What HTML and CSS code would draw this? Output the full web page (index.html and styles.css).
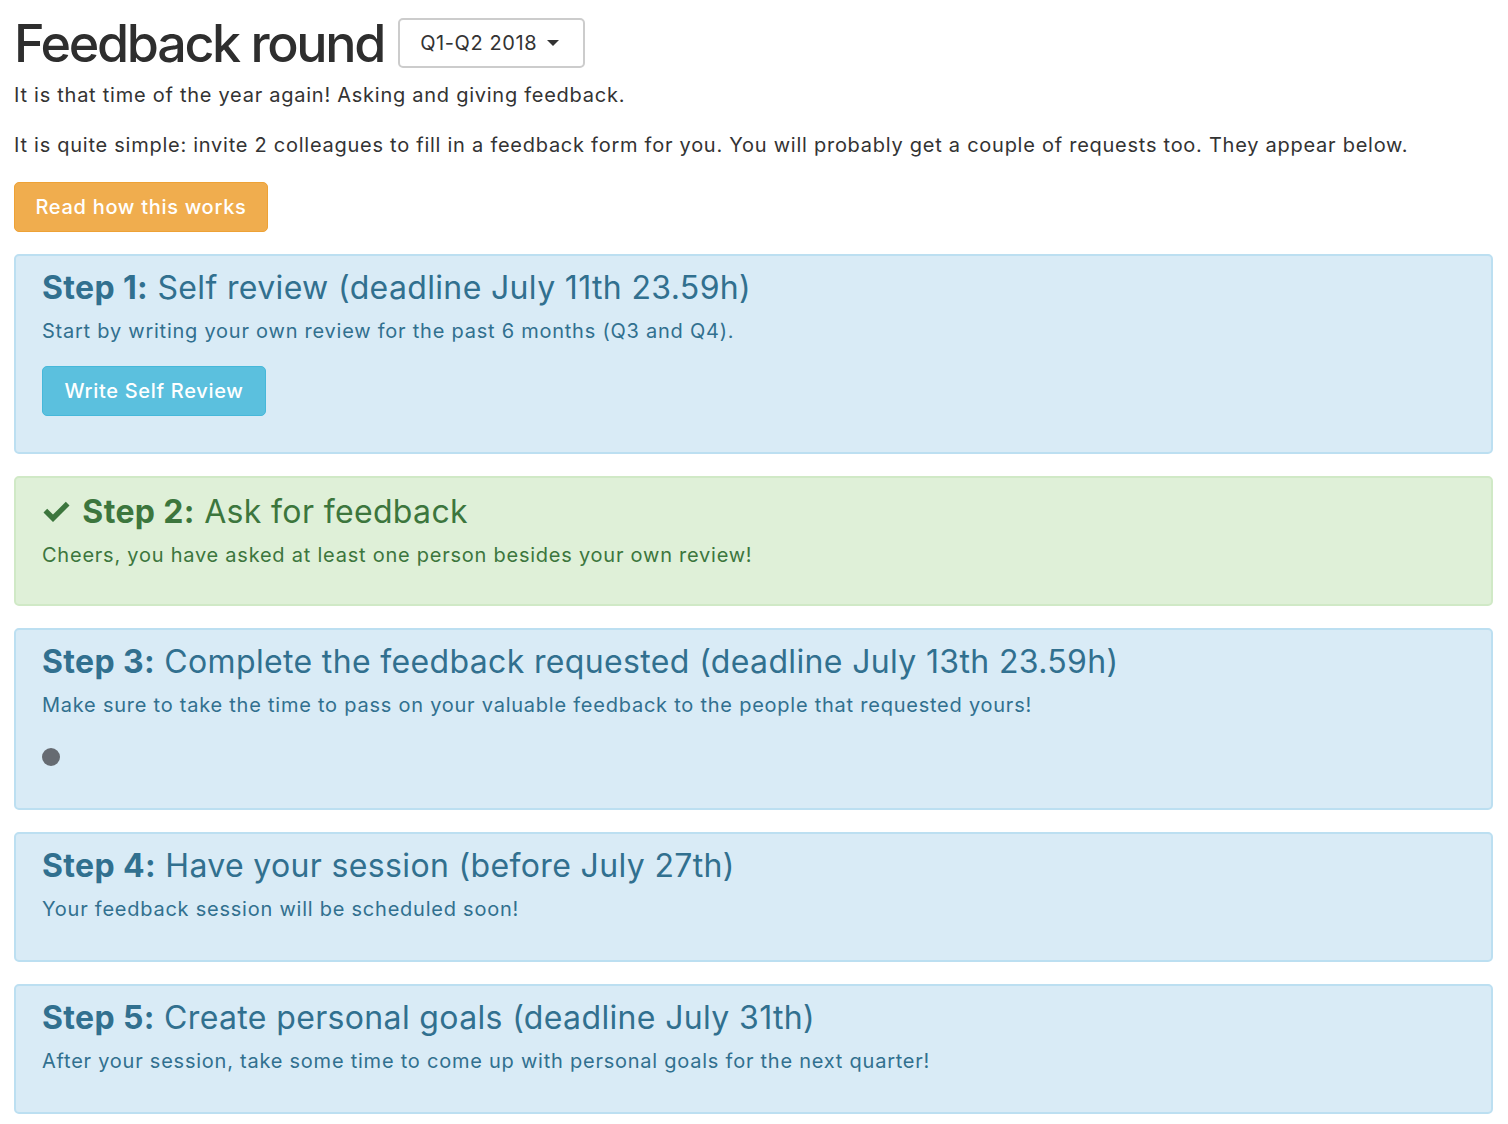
FILE: index.html
```html
<!DOCTYPE html>
<html>
<head>
<meta charset="utf-8">
<link rel="stylesheet" href="styles.css">
</head>
<body>
<div class="page">
  <div class="title-row">
    <h1 class="title">Feedback round</h1>
    <button class="dropdown">Q1-Q2 2018 <span class="caret"></span></button>
  </div>
  <p class="intro">It is that time of the year again! Asking and giving feedback.</p>
  <p class="intro">It is quite simple: invite 2 colleagues to fill in a feedback form for you. You will probably get a couple of requests too. They appear below.</p>
  <button class="btn btn-warning">Read how this works</button>

  <div class="alert alert-info">
    <h4 class="alert-heading"><strong>Step 1:</strong> Self review (deadline July 11th 23.59h)</h4>
    <p class="alert-text">Start by writing your own review for the past 6 months (Q3 and Q4).</p>
    <button class="btn btn-info">Write Self Review</button>
  </div>

  <div class="alert alert-success">
    <h4 class="alert-heading"><svg class="check" viewBox="0 0 29 22" width="29" height="22"><path d="M1.5 11.5 L5.2 7.8 L11 13.6 L23.8 0.8 L27.5 4.5 L11 21 Z" fill="#3c763d"/></svg> <strong>Step 2:</strong> Ask for feedback</h4>
    <p class="alert-text">Cheers, you have asked at least one person besides your own review!</p>
  </div>

  <div class="alert alert-info">
    <h4 class="alert-heading"><strong>Step 3:</strong> Complete the feedback requested (deadline July 13th 23.59h)</h4>
    <p class="alert-text">Make sure to take the time to pass on your valuable feedback to the people that requested yours!</p>
    <div class="dot-row"><span class="dot"></span></div>
  </div>

  <div class="alert alert-info">
    <h4 class="alert-heading"><strong>Step 4:</strong> Have your session (before July 27th)</h4>
    <p class="alert-text">Your feedback session will be scheduled soon!</p>
  </div>

  <div class="alert alert-info">
    <h4 class="alert-heading"><strong>Step 5:</strong> Create personal goals (deadline July 31th)</h4>
    <p class="alert-text">After your session, take some time to come up with personal goals for the next quarter!</p>
  </div>
</div>
</body>
</html>
```

FILE: styles.css
```css
* { box-sizing: border-box; }
body {
  margin: 0;
  font-family: Inter, "Noto Sans", sans-serif;
  color: #333;
  background: #fff;
}
.page {
  padding: 0 15px 0 14px;
}
.title-row {
  display: flex;
  align-items: center;
  gap: 14px;
  padding-top: 18px;
}
.title {
  margin: 0;
  font-size: 52px;
  font-weight: 500;
  line-height: 49px;
  letter-spacing: -2.3px;
  color: #2e2e2e;
}
.dropdown {
  font-family: inherit;
  height: 50px;
  width: 187px;
  background: #fff;
  border: 2px solid #ccc;
  border-radius: 5px;
  font-size: 20px;
  letter-spacing: 0.6px;
  color: #333;
  display: flex;
  align-items: center;
  padding: 0 0 0 20px;
  gap: 10px;
}
.caret {
  display: inline-block;
  width: 0;
  height: 0;
  border-left: 6px solid transparent;
  border-right: 6px solid transparent;
  border-top: 6px solid #333;
}
.intro {
  font-size: 20px;
  line-height: 28px;
  letter-spacing: 0.74px;
  margin: 13px 0 22px;
}
.intro + .intro { margin-top: 0; margin-bottom: 23px; }
.btn {
  font-family: inherit;
  font-size: 20px;
  font-weight: 500;
  letter-spacing: 0.7px;
  height: 50px;
  border-radius: 5px;
  border: 1px solid transparent;
  color: #fff;
  padding: 0 20px;
  cursor: pointer;
}
.btn-warning {
  background: #f0ad4e;
  border-color: #eea236;
  width: 254px;
  display: block;
}
.btn-info {
  background: #5bc0de;
  border-color: #46b8da;
  width: 224px;
  display: block;
  margin-bottom: 20px;
}
.alert {
  border: 2px solid;
  border-radius: 5px;
  padding: 14px 26px 16px;
  margin-top: 22px;
}
.alert-info {
  background: #d9ebf6;
  border-color: #bcdff1;
  color: #31708f;
}
.alert-success {
  background: #dff0d8;
  border-color: #d0e9c6;
  color: #3c763d;
}
.alert-heading {
  margin: 0;
  font-size: 32px;
  font-weight: 400;
  line-height: 36px;
  letter-spacing: 0.35px;
}
.alert-heading strong { font-weight: 700; }
.alert-success .alert-heading { padding-top: 2px; }
.check {
  vertical-align: baseline;
  margin-right: 2px;
}
.alert-text {
  font-size: 20px;
  line-height: 28px;
  letter-spacing: 0.76px;
  margin: 11px 0 21px;
}
.alert-success .alert-text { margin-bottom: 19px; }
.dot-row {
  height: 34px;
  display: flex;
  align-items: center;
  margin-bottom: 18px;
}
.dot {
  width: 18px;
  height: 18px;
  border-radius: 50%;
  background: #666b72;
}
```
